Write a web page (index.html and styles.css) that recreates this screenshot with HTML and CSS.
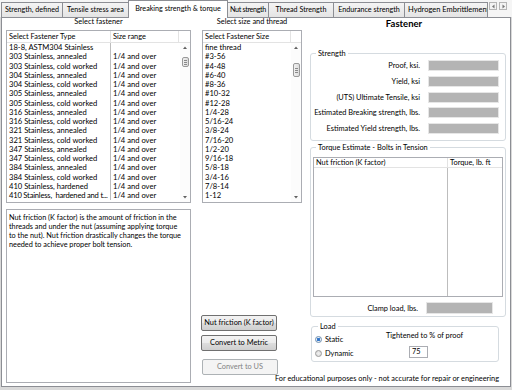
FILE: index.html
```html
<!DOCTYPE html>
<html>
<head>
<meta charset="utf-8">
<link rel="stylesheet" href="styles.css">
</head>
<body>
<div class="tabs">
  <div class="tab w1">Strength, defined</div>
  <div class="tab w2">Tensile stress area</div>
  <div class="tab sel w3">Breaking strength &amp; torque</div>
  <div class="tab w4">Nut strength</div>
  <div class="tab w5">Thread Strength</div>
  <div class="tab w6">Endurance strength</div>
  <div class="tab w7 clip">Hydrogen Embrittlement</div>
  <div class="tabscroll">
    <span class="sbtn"><svg width="5" height="5" viewBox="0 0 5 5"><path d="M3.5 0.5 L1 2.5 L3.5 4.5Z" fill="#777"/></svg></span>
    <span class="sbtn"><svg width="5" height="5" viewBox="0 0 5 5"><path d="M1.5 0.5 L4 2.5 L1.5 4.5Z" fill="#777"/></svg></span>
  </div>
</div>
<div class="panel">
  <div class="left">
    <div class="caption">Select fastener</div>
    <div class="listbox">
      <div class="lhead">
        <div class="hc a1">Select Fastener Type</div>
        <div class="hc a2">Size range</div>
        <div class="hc last"></div>
      </div>
      <div class="lbody">
        <div class="rows grid2">
          <div class="cell a1">18-8, ASTM304 Stainless</div><div class="cell a2"></div>
          <div class="cell a1">303 Stainless, annealed</div><div class="cell a2">1/4 and over</div>
          <div class="cell a1">303 Stainless, cold worked</div><div class="cell a2">1/4 and over</div>
          <div class="cell a1">304 Stainless, annealed</div><div class="cell a2">1/4 and over</div>
          <div class="cell a1">304 Stainless, cold worked</div><div class="cell a2">1/4 and over</div>
          <div class="cell a1">305 Stainless, annealed</div><div class="cell a2">1/4 and over</div>
          <div class="cell a1">305 Stainless, cold worked</div><div class="cell a2">1/4 and over</div>
          <div class="cell a1">316 Stainless, annealed</div><div class="cell a2">1/4 and over</div>
          <div class="cell a1">316 Stainless, cold worked</div><div class="cell a2">1/4 and over</div>
          <div class="cell a1">321 Stainless, annealed</div><div class="cell a2">1/4 and over</div>
          <div class="cell a1">321 Stainless, cold worked</div><div class="cell a2">1/4 and over</div>
          <div class="cell a1">347 Stainless, annealed</div><div class="cell a2">1/4 and over</div>
          <div class="cell a1">347 Stainless, cold worked</div><div class="cell a2">1/4 and over</div>
          <div class="cell a1">384 Stainless, annealed</div><div class="cell a2">1/4 and over</div>
          <div class="cell a1">384 Stainless, cold worked</div><div class="cell a2">1/4 and over</div>
          <div class="cell a1">410 Stainless, hardened</div><div class="cell a2">1/4 and over</div>
          <div class="cell a1 tight-text">410 Stainless,&nbsp; hardened and t...</div><div class="cell a2">1/4 and over</div>
        </div>
        <div class="vscroll">
          <svg class="arr" width="10" height="10" viewBox="0 0 10 10"><path d="M3 6 L5 3.5 L7 6Z" fill="#606060"/></svg>
          <div class="thumb t1"><span></span><span></span><span></span></div>
          <div class="spacer"></div>
          <svg class="arr" width="10" height="10" viewBox="0 0 10 10"><path d="M3 4 L5 6.5 L7 4Z" fill="#606060"/></svg>
        </div>
      </div>
    </div>
    <div class="textbox">Nut friction (K factor) is the amount of friction in the<br>threads and under the nut (assuming applying torque<br>to the nut). Nut friction drastically changes the torque<br>needed to achieve proper bolt tension.</div>
  </div>
  <div class="rest">
    <div class="cols">
      <div class="mid">
        <div class="caption">Select size and thread</div>
        <div class="listbox">
          <div class="lhead">
            <div class="hc b1">Select Fastener Size</div>
            <div class="hc last"></div>
          </div>
          <div class="lbody">
            <div class="rows">
              <div class="cell">fine thread</div>
              <div class="cell">#3-56</div>
              <div class="cell">#4-48</div>
              <div class="cell">#6-40</div>
              <div class="cell">#8-36</div>
              <div class="cell">#10-32</div>
              <div class="cell">#12-28</div>
              <div class="cell">1/4-28</div>
              <div class="cell">5/16-24</div>
              <div class="cell">3/8-24</div>
              <div class="cell">7/16-20</div>
              <div class="cell">1/2-20</div>
              <div class="cell">9/16-18</div>
              <div class="cell">5/8-18</div>
              <div class="cell">3/4-16</div>
              <div class="cell">7/8-14</div>
              <div class="cell">1-12</div>
            </div>
            <div class="vscroll">
              <svg class="arr" width="10" height="10" viewBox="0 0 10 10"><path d="M3 6 L5 3.5 L7 6Z" fill="#606060"/></svg>
              <div class="thumb t2"><span></span><span></span><span></span></div>
              <div class="spacer"></div>
              <svg class="arr" width="10" height="10" viewBox="0 0 10 10"><path d="M3 4 L5 6.5 L7 4Z" fill="#606060"/></svg>
            </div>
          </div>
        </div>
        <div class="buttons">
          <div class="btn b-nut">Nut friction (K factor)</div>
          <div class="btn b-metric">Convert to Metric</div>
          <div class="btn b-us disabled">Convert to US</div>
        </div>
      </div>
      <div class="right">
        <div class="title">Fastener</div>
        <fieldset class="grp strength">
          <legend>Strength</legend>
          <div class="srow"><span class="lbl">Proof, ksi.</span><span class="field"></span></div>
          <div class="srow"><span class="lbl">Yield, ksi</span><span class="field"></span></div>
          <div class="srow"><span class="lbl">(UTS) Ultimate Tensile, ksi</span><span class="field"></span></div>
          <div class="srow"><span class="lbl">Estimated Breaking strength, lbs.</span><span class="field"></span></div>
          <div class="srow"><span class="lbl">Estimated Yield strength, lbs.</span><span class="field"></span></div>
        </fieldset>
        <fieldset class="grp torque">
          <legend>Torque Estimate - Bolts in Tension</legend>
          <div class="tlist">
            <div class="thead"><div class="tc k">Nut friction (K factor)</div><div class="tc q">Torque, lb. ft</div></div>
            <div class="tbody"><div class="tc k"></div><div class="tc q"></div></div>
          </div>
          <div class="crow"><span class="lbl">Clamp load, lbs.</span><span class="field cf"></span></div>
        </fieldset>
        <fieldset class="grp load">
          <legend>Load</legend>
          <div class="loadin">
            <div class="radios">
              <div class="radio"><span class="dot on"></span>Static</div>
              <div class="radio"><span class="dot"></span>Dynamic</div>
            </div>
            <div class="tight">
              <div class="tlabel">Tightened to % of proof</div>
              <div class="num">75</div>
            </div>
          </div>
        </fieldset>
      </div>
    </div>
    <div class="footer">For educational purposes only - not accurate for repair or engineering</div>
  </div>
</div>
</body>
</html>
```
FILE: styles.css
```css
* { box-sizing: border-box; }
body {
  margin: 0;
  width: 512px;
  height: 390px;
  overflow: hidden;
  background: #d9d9d9;
  font-family: Lato, "Noto Sans", sans-serif;
  font-size: 7.4px;
  color: #000;
}
.tabs {
  display: flex;
  align-items: flex-end;
  height: 17px;
  padding-left: 1px;
  background: #f5f5f5;
}
.tab {
  height: 15px;
  border: 1px solid #8c8e94;
  border-bottom: none;
  background: linear-gradient(#f4f4f4, #e4e4e4);
  line-height: 13px;
  font-size: 7.2px;
  text-align: center;
  white-space: nowrap;
  overflow: hidden;
  margin-left: -1px;
}
.tab:first-child { margin-left: 0; }
.tab.sel {
  height: 18px;
  background: #fff;
  margin-bottom: -1px;
  position: relative;
  z-index: 1;
  line-height: 15px;
}
.w1 { width: 62px; }
.w2 { width: 67px; }
.w3 { width: 100px; }
.w4 { width: 42px; letter-spacing: -0.35px; }
.w5 { width: 66px; }
.w6 { width: 72px; }
.w7 { width: 84px; }
.tab.clip { text-align: left; padding-left: 3px; font-size: 7.5px; }
.tabscroll {
  display: flex;
  gap: 2px;
  margin-left: 1px;
  align-self: flex-start;
  margin-top: 2px;
}
.sbtn {
  width: 8px;
  height: 8px;
  border: 1px solid #b5b5b5;
  background: #f3f3f3;
  display: flex;
  align-items: center;
  justify-content: center;
}
.panel {
  margin-left: 1px;
  width: 510px;
  height: 370px;
  border: 1px solid #8c8e94;
  background: #fff;
  display: flex;
  padding: 0 4px 3px 4px;
}
.left {
  width: 185px;
  display: flex;
  flex-direction: column;
}
.caption {
  height: 8px;
  line-height: 8px;
  margin-bottom: 4px;
  text-align: center;
}
.listbox {
  height: 173px;
  border: 1px solid #abadb3;
  display: flex;
  flex-direction: column;
}
.lhead {
  display: flex;
  height: 12px;
  border-bottom: 1px solid #e3e3e3;
  line-height: 11px;
}
.hc {
  border-right: 1px solid #e3e3e3;
  padding-left: 2px;
  white-space: nowrap;
  overflow: hidden;
}
.hc.last { flex: 1; border-right: none; }
.a1 { width: 104px; }
.a2 { width: 68px; }
.b1 { width: 88px; }
.lbody {
  flex: 1;
  display: flex;
}
.rows {
  flex: 1;
  line-height: 9.25px;
  font-size: 7.6px;
}
.rows.grid2 {
  display: grid;
  grid-template-columns: 104px 68px;
  align-content: start;
}
.cell {
  height: 9.25px;
  padding-left: 2px;
  white-space: nowrap;
  overflow: hidden;
}
.cell.tight-text { letter-spacing: -0.2px; }
.grid2 .cell.a1 { border-right: 1px solid #bdbdbd; }
.vscroll {
  width: 10px;
  display: flex;
  flex-direction: column;
  align-items: center;
  background: #fcfcfc;
}
.arr { display: block; }
.spacer { flex: 1; }
.thumb {
  width: 7px;
  border: 1px solid #999;
  border-radius: 2px;
  background: linear-gradient(90deg, #f0f0f0, #dcdcdc);
  display: flex;
  flex-direction: column;
  align-items: center;
  justify-content: center;
  gap: 1px;
}
.thumb span { width: 3px; height: 1px; background: #8a8a8a; }
.t1 { margin-top: 4px; height: 10px; }
.t2 { margin-top: 10px; height: 14px; }
.textbox {
  margin-top: 6px;
  flex: 1;
  border: 1px solid #abadb3;
  padding: 2.5px 2px;
  line-height: 9px;
  font-size: 7.3px;
  white-space: nowrap;
}
.rest {
  flex: 1;
  display: flex;
  flex-direction: column;
}
.cols {
  flex: 1;
  display: flex;
}
.mid {
  width: 100px;
  margin-left: 11px;
  display: flex;
  flex-direction: column;
}
.buttons {
  margin-top: auto;
  display: flex;
  flex-direction: column;
}
.btn {
  width: 76px;
  height: 16px;
  border: 1px solid #707070;
  border-radius: 2px;
  background: linear-gradient(#f3f3f3 0%, #ebebeb 50%, #dddddd 51%, #cfcfcf 100%);
  text-align: center;
  line-height: 14px;
  white-space: nowrap;
}
.b-nut { margin-left: -1px; }
.b-metric { margin-left: -1px; margin-top: 4px; }
.b-us { margin-top: 8px; }
.btn.disabled {
  border-color: #adb2b5;
  background: #f4f4f4;
  color: #838383;
}
.right {
  width: 196px;
  margin-left: 8px;
  display: flex;
  flex-direction: column;
}
.title {
  height: 12px;
  line-height: 12px;
  font-size: 9.5px;
  font-weight: bold;
  text-align: center;
  margin-bottom: 18.5px;
  padding-right: 8px;
}
.grp {
  margin: 0;
  border: 1px solid #d5dbe0;
  border-radius: 3px;
  min-width: 0;
  padding: 0;
}
.grp legend {
  line-height: 9px;
  padding: 0 2px;
  margin-left: 3px;
}
.strength {
  padding: 2.5px 6px 6px 2px;
  display: flex;
  flex-direction: column;
  gap: 4.75px;
}
.srow {
  display: flex;
  align-items: center;
  height: 11px;
}
.lbl {
  flex: 1;
  text-align: right;
  white-space: nowrap;
}
.field {
  width: 71px;
  height: 11px;
  margin-left: 8px;
  background: #b4b4b4;
  border: 1px solid #e6e6e6;
}
.torque {
  margin-top: 1.5px;
  padding: 5.5px 2px 1.5px 2px;
}
.tlist {
  height: 140px;
  border: 1px solid #abadb3;
  display: flex;
  flex-direction: column;
}
.thead {
  display: flex;
  height: 10px;
  line-height: 9px;
  border-bottom: 1px solid #e3e3e3;
}
.tbody {
  flex: 1;
  display: flex;
}
.tc.k {
  width: 134px;
  border-right: 1px solid #bdbdbd;
  padding-left: 2px;
}
.thead .tc.k { border-right-color: #e3e3e3; }
.tc.q {
  flex: 1;
  padding-left: 2px;
}
.crow {
  display: flex;
  align-items: center;
  height: 12px;
  margin-top: 5px;
  padding-right: 10px;
}
.field.cf { width: 67px; height: 12px; }
.load {
  margin: 5px 7px 0 1px;
  padding: 0 0 1px 3px;
}
.loadin { display: flex; }
.radios {
  width: 71px;
  padding-top: 1.5px;
}
.radio {
  height: 14px;
  display: flex;
  align-items: center;
  gap: 3px;
}
.dot {
  width: 7px;
  height: 7px;
  border-radius: 50%;
  border: 1px solid #9a9a9a;
  background: radial-gradient(circle, #f0f0f0, #d8d8d8);
}
.dot.on {
  border-color: #6f8fb0;
  background: radial-gradient(circle, #2f6fc4 0, #3c7fd0 45%, #e8eef5 55%);
}
.tight { padding-top: 0; }
.tlabel { line-height: 9px; }
.num {
  width: 19px;
  height: 12px;
  margin: 6.5px 0 0 23px;
  border: 1px solid #abadb3;
  padding-left: 2px;
  line-height: 10px;
}
.footer {
  height: 8px;
  line-height: 8px;
  text-align: right;
  padding-right: 7px;
  white-space: nowrap;
}
```
